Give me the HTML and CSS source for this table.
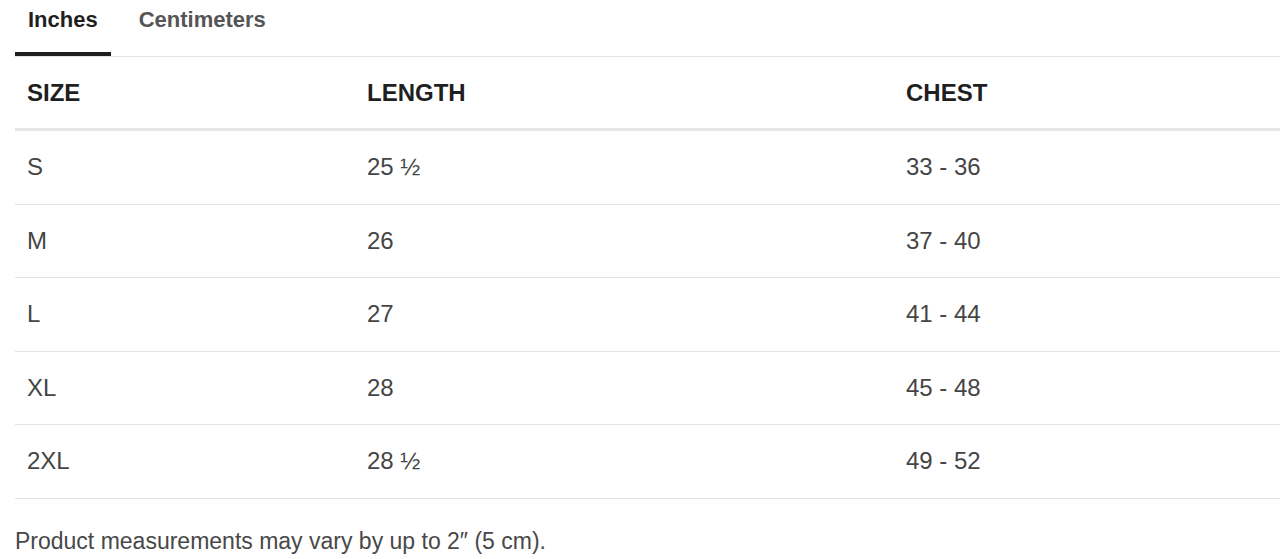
FILE: index.html
```html
<!DOCTYPE html>
<html lang="en">
<head>
<meta charset="utf-8">
<title>Size guide</title>
<link rel="stylesheet" href="styles.css">
</head>
<body>
<div class="guide">
  <div class="tabs">
    <button class="tab tab-active">Inches</button>
    <button class="tab">Centimeters</button>
  </div>
  <table class="sizes">
    <thead>
      <tr><th class="c1">SIZE</th><th class="c2">LENGTH</th><th class="c3">CHEST</th></tr>
    </thead>
    <tbody>
      <tr><td>S</td><td>25 ½</td><td>33 - 36</td></tr>
      <tr><td>M</td><td>26</td><td>37 - 40</td></tr>
      <tr><td>L</td><td>27</td><td>41 - 44</td></tr>
      <tr><td>XL</td><td>28</td><td>45 - 48</td></tr>
      <tr><td>2XL</td><td>28 ½</td><td>49 - 52</td></tr>
    </tbody>
  </table>
  <p class="note">Product measurements may vary by up to 2″ (5 cm).</p>
</div>
</body>
</html>
```
FILE: styles.css
```css
html, body {
  margin: 0;
  padding: 0;
  background: #fff;
}
body {
  font-family: "Liberation Sans", Arial, sans-serif;
  color: #444;
}
.guide {
  padding-left: 15px;
}
.tabs {
  display: flex;
  gap: 15px;
  border-bottom: 1px solid #e2e2e2;
  height: 56px;
  align-items: flex-start;
}
.tab {
  font-family: inherit;
  font-size: 22px;
  font-weight: bold;
  color: #555;
  background: none;
  border: 0;
  padding: 7px 13px 19px;
  height: 56px;
  box-sizing: border-box;
  line-height: 26px;
  cursor: pointer;
  border-bottom: 4px solid transparent;
}
.tab-active {
  color: #1f1f1f;
  border-bottom-color: #1f1f1f;
}
.sizes {
  width: 1265px;
  border-collapse: collapse;
  table-layout: fixed;
}
.c1 { width: 316px; }
.c2 { width: 515px; }
.sizes th {
  text-align: left;
  font-size: 24px;
  font-weight: bold;
  color: #1f1f1f;
  height: 71px;
  padding: 0 12px;
  border-bottom: 3px solid #e6e6e6;
}
.sizes td {
  font-size: 24px;
  color: #454545;
  height: 72.5px;
  padding: 0 12px;
  border-bottom: 1px solid #e3e3e3;
}
.note {
  margin: 29px 0 0;
  font-size: 23px;
  line-height: 26px;
  color: #484848;
}
```
